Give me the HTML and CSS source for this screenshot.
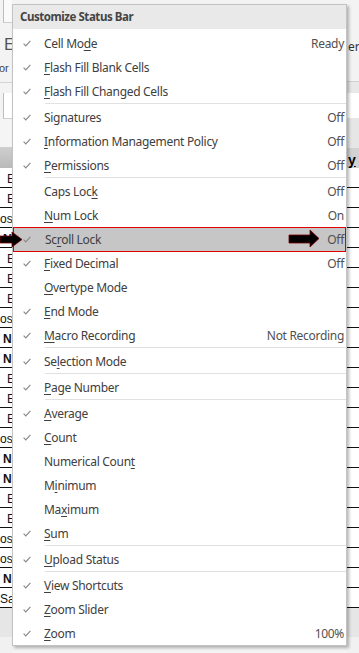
FILE: index.html
```html
<!DOCTYPE html>
<html>
<head>
<meta charset="utf-8">
<link rel="stylesheet" href="styles.css">
</head>
<body>
<div class="sheet">
  <div class="strip strip-left">
    <div class="top-l"></div>
    <div class="ribbon-l"><span class="big-e">E</span><span class="or">or</span></div>
    <div class="gap-l"></div>
    <div class="input-l"></div>
    <div class="light-l"></div>
    <div class="hdr-l"></div>
    <div class="rows">
      <div class="cell c-e">E</div>
      <div class="cell c-e">E</div>
      <div class="cell c-os">os</div>
      <div class="cell c-n">N</div>
      <div class="cell c-e">E</div>
      <div class="cell c-e">E</div>
      <div class="cell c-e">E</div>
      <div class="cell c-os">os</div>
      <div class="cell c-n">N</div>
      <div class="cell c-n">N</div>
      <div class="cell c-e">E</div>
      <div class="cell c-e">E</div>
      <div class="cell c-e">E</div>
      <div class="cell c-os">os</div>
      <div class="cell c-n">N</div>
      <div class="cell c-n">N</div>
      <div class="cell c-e">E</div>
      <div class="cell c-e">E</div>
      <div class="cell c-os">os</div>
      <div class="cell c-os">os</div>
      <div class="cell c-n">N</div>
      <div class="cell c-os">Sa</div>
    </div>
    <div class="foot-a"></div>
    <div class="foot-b"></div>
  </div>
  <div class="mid"></div>
  <div class="strip strip-right">
    <div class="ribbon-r"><span class="er">er</span></div>
    <div class="gap-r"></div>
    <div class="white-r"></div>
    <div class="light-r"></div>
    <div class="hdr-r"><span class="hy">y</span></div>
    <div class="rows">
      <div class="cell"></div><div class="cell"></div><div class="cell"></div><div class="cell"></div>
      <div class="cell"></div><div class="cell"></div><div class="cell"></div><div class="cell"></div>
      <div class="cell"></div><div class="cell"></div><div class="cell"></div><div class="cell"></div>
      <div class="cell"></div><div class="cell"></div><div class="cell"></div><div class="cell"></div>
      <div class="cell"></div><div class="cell"></div><div class="cell"></div><div class="cell"></div>
      <div class="cell"></div><div class="cell"></div>
    </div>
    <div class="foot-a"></div>
    <div class="foot-b"></div>
  </div>
</div>

<div class="menu">
  <div class="menu-title">Customize Status Bar</div>

  <div class="item"><span class="chk"><svg viewBox="0 0 8 7" width="8" height="7"><path d="M0.6 3.6 L2.8 5.9 L7.4 0.8"/></svg></span><span class="label">Cell Mo<u>d</u>e</span><span class="val">Ready</span></div>
  <div class="item"><span class="chk"><svg viewBox="0 0 8 7" width="8" height="7"><path d="M0.6 3.6 L2.8 5.9 L7.4 0.8"/></svg></span><span class="label"><u>F</u>lash Fill Blank Cells</span></div>
  <div class="item"><span class="chk"><svg viewBox="0 0 8 7" width="8" height="7"><path d="M0.6 3.6 L2.8 5.9 L7.4 0.8"/></svg></span><span class="label"><u>F</u>lash Fill Changed Cells</span></div>
  <div class="sep"></div>
  <div class="item"><span class="chk"><svg viewBox="0 0 8 7" width="8" height="7"><path d="M0.6 3.6 L2.8 5.9 L7.4 0.8"/></svg></span><span class="label">Si<u>g</u>natures</span><span class="val">Off</span></div>
  <div class="item"><span class="chk"><svg viewBox="0 0 8 7" width="8" height="7"><path d="M0.6 3.6 L2.8 5.9 L7.4 0.8"/></svg></span><span class="label"><u>I</u>nformation Management Policy</span><span class="val">Off</span></div>
  <div class="item"><span class="chk"><svg viewBox="0 0 8 7" width="8" height="7"><path d="M0.6 3.6 L2.8 5.9 L7.4 0.8"/></svg></span><span class="label"><u>P</u>ermissions</span><span class="val">Off</span></div>
  <div class="sep"></div>
  <div class="item"><span class="chk"></span><span class="label">Caps Loc<u>k</u></span><span class="val">Off</span></div>
  <div class="item"><span class="chk"></span><span class="label"><u>N</u>um Lock</span><span class="val">On</span></div>
  <div class="item hl"><span class="chk"><svg viewBox="0 0 8 7" width="8" height="7"><path d="M0.6 3.6 L2.8 5.9 L7.4 0.8"/></svg></span><span class="label">Sc<u>r</u>oll Lock</span><span class="val">Off</span></div>
  <div class="item"><span class="chk"><svg viewBox="0 0 8 7" width="8" height="7"><path d="M0.6 3.6 L2.8 5.9 L7.4 0.8"/></svg></span><span class="label"><u>F</u>ixed Decimal</span><span class="val">Off</span></div>
  <div class="item"><span class="chk"></span><span class="label"><u>O</u>vertype Mode</span></div>
  <div class="item"><span class="chk"><svg viewBox="0 0 8 7" width="8" height="7"><path d="M0.6 3.6 L2.8 5.9 L7.4 0.8"/></svg></span><span class="label"><u>E</u>nd Mode</span></div>
  <div class="item"><span class="chk"><svg viewBox="0 0 8 7" width="8" height="7"><path d="M0.6 3.6 L2.8 5.9 L7.4 0.8"/></svg></span><span class="label"><u>M</u>acro Recording</span><span class="val">Not Recording</span></div>
  <div class="sep"></div>
  <div class="item"><span class="chk"><svg viewBox="0 0 8 7" width="8" height="7"><path d="M0.6 3.6 L2.8 5.9 L7.4 0.8"/></svg></span><span class="label">Se<u>l</u>ection Mode</span></div>
  <div class="sep"></div>
  <div class="item"><span class="chk"><svg viewBox="0 0 8 7" width="8" height="7"><path d="M0.6 3.6 L2.8 5.9 L7.4 0.8"/></svg></span><span class="label"><u>P</u>age Number</span></div>
  <div class="sep"></div>
  <div class="item"><span class="chk"><svg viewBox="0 0 8 7" width="8" height="7"><path d="M0.6 3.6 L2.8 5.9 L7.4 0.8"/></svg></span><span class="label"><u>A</u>verage</span></div>
  <div class="item"><span class="chk"><svg viewBox="0 0 8 7" width="8" height="7"><path d="M0.6 3.6 L2.8 5.9 L7.4 0.8"/></svg></span><span class="label"><u>C</u>ount</span></div>
  <div class="item"><span class="chk"></span><span class="label">Numerical Coun<u>t</u></span></div>
  <div class="item"><span class="chk"></span><span class="label">M<u>i</u>nimum</span></div>
  <div class="item"><span class="chk"></span><span class="label">Ma<u>x</u>imum</span></div>
  <div class="item"><span class="chk"><svg viewBox="0 0 8 7" width="8" height="7"><path d="M0.6 3.6 L2.8 5.9 L7.4 0.8"/></svg></span><span class="label"><u>S</u>um</span></div>
  <div class="sep"></div>
  <div class="item"><span class="chk"><svg viewBox="0 0 8 7" width="8" height="7"><path d="M0.6 3.6 L2.8 5.9 L7.4 0.8"/></svg></span><span class="label"><u>U</u>pload Status</span></div>
  <div class="sep"></div>
  <div class="item"><span class="chk"><svg viewBox="0 0 8 7" width="8" height="7"><path d="M0.6 3.6 L2.8 5.9 L7.4 0.8"/></svg></span><span class="label"><u>V</u>iew Shortcuts</span></div>
  <div class="item"><span class="chk"><svg viewBox="0 0 8 7" width="8" height="7"><path d="M0.6 3.6 L2.8 5.9 L7.4 0.8"/></svg></span><span class="label"><u>Z</u>oom Slider</span></div>
  <div class="item"><span class="chk"><svg viewBox="0 0 8 7" width="8" height="7"><path d="M0.6 3.6 L2.8 5.9 L7.4 0.8"/></svg></span><span class="label"><u>Z</u>oom</span><span class="val">100%</span></div>
</div>

<svg class="arrow arrow-left" width="24" height="18" viewBox="0 0 24 18"><path d="M0 5 H12 V1 L22 8.5 L12 16 V12 H0 Z"/></svg>
<svg class="arrow arrow-right" width="33" height="20" viewBox="0 0 33 20"><path d="M1 6 H22 V1 L31 9.5 L22 18 V14 H1 Z"/></svg>
</body>
</html>
```
FILE: styles.css
```css
* { box-sizing: border-box; }
html, body { margin: 0; padding: 0; }
body {
  width: 359px;
  height: 653px;
  overflow: hidden;
  background: #f3f3f3;
  font-family: "Noto Sans", "Open Sans", sans-serif;
}

/* background spreadsheet */
.sheet {
  display: grid;
  grid-template-columns: 12px 1fr 12px;
  height: 653px;
}
.mid { background: #f3f3f3; }
.strip { display: flex; flex-direction: column; overflow: hidden; }

.top-l { height: 23px; background: #fafafa; border-bottom: 1px solid #cfcfcf; border-left: 1px solid #bdbdbd; margin-left: 3px; }
.ribbon-l { height: 60px; background: #f3f3f3; display: flex; flex-direction: column; padding-left: 4px; border-bottom: 1px solid #d4d4d4; }
.big-e { font-family: "Liberation Sans", sans-serif; font-size: 17px; line-height: 17px; color: #555; margin-top: 13px; }
.or { font-family: "Liberation Sans", sans-serif; font-size: 11px; color: #444; margin-top: 9px; margin-left: -5px; }
.gap-l { height: 10px; background: #f3f3f3; }
.input-l { height: 26px; background: #fff; border-left: 1px solid #bdbdbd; border-bottom: 1px solid #d0d0d0; margin-left: 3px; }
.light-l { height: 28px; background: #f5f5f5; }
.hdr-l { height: 21px; background: linear-gradient(#cfcfcf, #b9b9b9); }

.rows { display: flex; flex-direction: column; background: #fff; }
.rows .cell {
  height: 20px;
  border-bottom: 1px solid #111;
  font-family: "Liberation Sans", sans-serif;
  font-size: 12px;
  line-height: 22px;
  color: #111;
  white-space: nowrap;
}
.c-e { padding-left: 7px; }
.c-n { padding-left: 3px; font-weight: bold; color: #1a1a4a; }
.c-os { padding-left: 0; }

.foot-a { height: 29px; background: #e6e6e6; }
.foot-b { flex: 1; background: #f1f1f1; }

.ribbon-r { height: 82px; background: #f3f3f3; border-bottom: 1px solid #d0d0d0; padding-top: 34px; padding-left: 1px; }
.er { font-family: "Noto Sans", sans-serif; font-size: 12px; color: #333; }
.gap-r { height: 11px; background: #e8e8e8; }
.white-r { height: 25px; background: #fff; }
.light-r { height: 30px; background: #e6e6e6; }
.hdr-r { height: 20px; background: #d2d2d2; padding-left: 1px; }
.hy { font-family: "Liberation Sans", sans-serif; font-weight: bold; font-size: 14px; line-height: 18px; color: #000; text-decoration: underline; }
.strip-right .rows { background: #fff; }

/* menu */
.menu {
  position: absolute;
  left: 12px;
  top: 4px;
  width: 335px;
  background: #fff;
  border: 1px solid #c3c3c3;
  box-shadow: 2px 2px 3px rgba(0, 0, 0, 0.28);
  color: #404040;
  font-size: 12px;
  letter-spacing: -0.3px;
}
.menu-title {
  height: 24px;
  margin-bottom: 2px;
  background: #e9e9e9;
  padding-left: 7px;
  font-weight: bold;
  font-size: 11.5px;
  letter-spacing: -0.45px;
  line-height: 24px;
  color: #444;
}
.item {
  display: flex;
  align-items: center;
  height: 24px;
  padding-right: 2px;
  white-space: nowrap;
}
.chk {
  width: 31px;
  flex: none;
  padding-left: 10px;
  display: flex;
  align-items: center;
  height: 24px;
}
.chk svg { display: block; }
.chk path { fill: none; stroke: #8a8a8a; stroke-width: 1.2; }
.label { flex: 1; }
.label u { text-underline-offset: 2px; text-decoration-thickness: 1px; }
.val { color: #505050; }
.sep {
  height: 2px;
  margin-left: 32px;
  border-top: 1px solid #e1e1e1;
}
.item.hl {
  background: #c6c6c6;
  border: 1px solid #e00000;
  height: 25px;
  margin-bottom: -1px;
  position: relative;
}
.item.hl .chk { padding-left: 9px; }
.item.hl { padding-right: 1px; }

/* annotation arrows */
.arrow { position: absolute; }
.arrow path { fill: #000; stroke: #7a0000; stroke-width: 0.8; }
.arrow-left { left: 0; top: 231px; }
.arrow-right { left: 288px; top: 229px; }
```
